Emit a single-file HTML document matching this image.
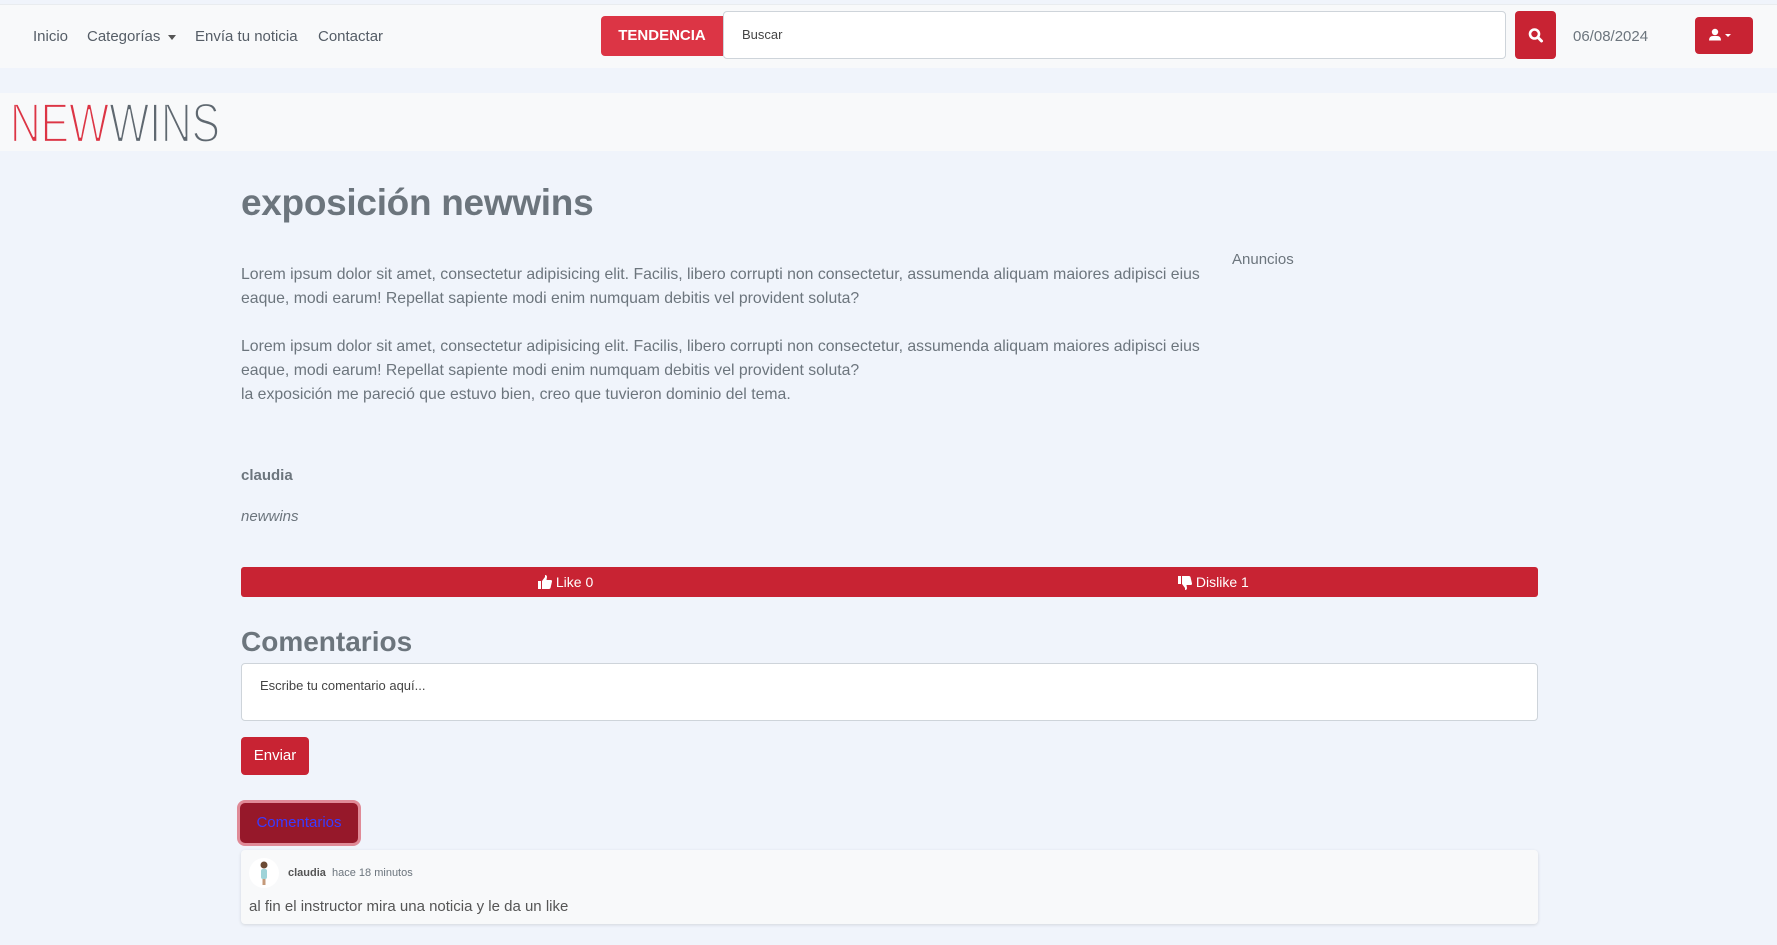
<!DOCTYPE html>
<html><head><meta charset="utf-8">
<style>
*{box-sizing:border-box;margin:0;padding:0}
body{width:1777px;height:945px;overflow:hidden;background:#f0f4fb;font-family:"Liberation Sans",Arial,sans-serif;color:#6c757d;position:relative}
.abs{position:absolute;white-space:nowrap}
.nav{position:absolute;left:0;top:4px;width:1777px;height:64px;background:#f8f9fa;border-top:1px solid #e9ecef}
.navl{font-size:15px;color:#555d66;top:28px}
.logo{position:absolute;left:0;top:93px;width:1777px;height:58px;background:#f8f9fa}
p.t{font-size:15.8px;line-height:24px}
.red{background:#c82333}
</style></head><body>
<div class="nav"></div>
<div class="abs navl" style="left:33px">Inicio</div>
<div class="abs navl" style="left:87px">Categorías <span style="display:inline-block;border:4px solid transparent;border-top:5px solid #555;vertical-align:middle;margin-left:3px;margin-top:4px"></span></div>
<div class="abs navl" style="left:195px">Envía tu noticia</div>
<div class="abs navl" style="left:318px">Contactar</div>
<div class="abs" style="left:601px;top:16px;width:122px;height:40px;background:#dc3545;border-radius:4px 0 0 4px;color:#fff;font-weight:bold;font-size:15px;line-height:40px;text-align:center">TENDENCIA</div>
<div class="abs" style="left:723px;top:11px;width:783px;height:48px;background:#fff;border:1px solid #ced4da;border-radius:4px;font-size:13px;line-height:46px;padding-left:18px;color:#444">Buscar</div>
<div class="abs red" style="left:1515px;top:11px;width:41px;height:48px;border-radius:4px">
<svg width="41" height="48" viewBox="0 0 41 48"><circle cx="19.5" cy="23" r="4.5" fill="none" stroke="#fff" stroke-width="2.6"/><line x1="23" y1="26.5" x2="26.5" y2="30" stroke="#fff" stroke-width="3" stroke-linecap="round"/></svg></div>
<div class="abs" style="left:1573px;top:28px;font-size:15px;color:#6c757d">06/08/2024</div>
<div class="abs red" style="left:1695px;top:17px;width:58px;height:37px;border-radius:4px">
<svg width="58" height="37" viewBox="0 0 58 37"><circle cx="20" cy="15" r="3.2" fill="#fff"/><path d="M14 23.5 Q14 19 18 19 L22 19 Q26 19 26 23.5 Z" fill="#fff"/><path d="M30 17 L36 17 L33 20 Z" fill="#fff"/></svg></div>
<div class="logo"></div>
<svg class="abs" style="left:10px;top:98px" width="220" height="50" viewBox="0 0 220 50"><text x="0" y="44" font-family="Liberation Sans" font-size="56" textLength="210" lengthAdjust="spacingAndGlyphs" fill="#f8f9fa" stroke-width="1.6"><tspan fill="#dc3545">NEW</tspan><tspan fill="#5f6870">WINS</tspan></text><text x="0" y="44" font-family="Liberation Sans" font-size="56" textLength="210" lengthAdjust="spacingAndGlyphs" fill="none" stroke="#f8f9fa" stroke-width="2.2">NEWWINS</text></svg>
<div class="abs" style="left:241px;top:182px;font-size:37px;font-weight:bold;color:#6c757d;letter-spacing:-0.3px">exposición newwins</div>
<p class="abs t" style="left:241px;top:263px">Lorem ipsum dolor sit amet, consectetur adipisicing elit. Facilis, libero corrupti non consectetur, assumenda aliquam maiores adipisci eius<br>eaque, modi earum! Repellat sapiente modi enim numquam debitis vel provident soluta?</p>
<p class="abs t" style="left:241px;top:335px">Lorem ipsum dolor sit amet, consectetur adipisicing elit. Facilis, libero corrupti non consectetur, assumenda aliquam maiores adipisci eius<br>eaque, modi earum! Repellat sapiente modi enim numquam debitis vel provident soluta?<br>la exposición me pareció que estuvo bien, creo que tuvieron dominio del tema.</p>
<div class="abs" style="left:1232px;top:251px;font-size:15px">Anuncios</div>
<div class="abs" style="left:241px;top:467px;font-size:15px;font-weight:bold">claudia</div>
<div class="abs" style="left:241px;top:508px;font-size:15px;font-style:italic">newwins</div>
<div class="abs red" style="left:241px;top:567px;width:1297px;height:30px;border-radius:3px;color:#fff;font-size:14px;line-height:30px">
<span style="position:absolute;left:297px"><svg width="14" height="14" viewBox="0 0 14 14" style="vertical-align:-2px"><rect x="0" y="6" width="3" height="8" fill="#fff"/><path d="M4 6 L7 2 L7 0 Q9 0 9 2 L8.5 5 L13 5 Q14 5 14 6.5 L12.5 13 Q12 14 11 14 L4 14 Z" fill="#fff"/></svg> Like 0</span>
<span style="position:absolute;left:937px"><svg width="14" height="14" viewBox="0 0 14 14" style="vertical-align:-3px;transform:scaleY(-1)"><rect x="0" y="6" width="3" height="8" fill="#fff"/><path d="M4 6 L7 2 L7 0 Q9 0 9 2 L8.5 5 L13 5 Q14 5 14 6.5 L12.5 13 Q12 14 11 14 L4 14 Z" fill="#fff"/></svg> Dislike 1</span></div>
<div class="abs" style="left:241px;top:626px;font-size:28px;font-weight:bold">Comentarios</div>
<div class="abs" style="left:241px;top:663px;width:1297px;height:58px;background:#fff;border:1px solid #ced4da;border-radius:4px;font-size:13px;padding:14px 18px;color:#444">Escribe tu comentario aquí...</div>
<div class="abs red" style="left:241px;top:737px;width:68px;height:38px;border-radius:4px;color:#fff;font-size:15px;line-height:38px;text-align:center">Enviar</div>
<div class="abs" style="left:240px;top:803px;width:118px;height:40px;border-radius:5px;background:#96182a;box-shadow:0 0 0 3px #e08a97;color:#3b3bff;font-size:15px;line-height:40px;text-align:center">Comentarios</div>
<div class="abs" style="left:241px;top:850px;width:1297px;height:74px;background:#f8f9fa;border-radius:4px;box-shadow:0 1px 3px rgba(0,0,0,.12)">
<svg class="abs" style="left:8px;top:8px" width="30" height="30" viewBox="0 0 30 30"><circle cx="15" cy="15" r="15" fill="#fff"/><circle cx="15" cy="7" r="3.5" fill="#6b4a34"/><rect x="12" y="11" width="6" height="10" rx="2" fill="#9fd3d8"/><rect x="13.5" y="21" width="3" height="6" fill="#c49a7a"/></svg>
<div class="abs" style="left:47px;top:17px;font-size:11px"><b style="color:#555">claudia</b>&nbsp;&nbsp;hace 18 minutos</div>
<div class="abs" style="left:8px;top:48px;font-size:15px;color:#555">al fin el instructor mira una noticia y le da un like</div>
</div>
</body></html>
